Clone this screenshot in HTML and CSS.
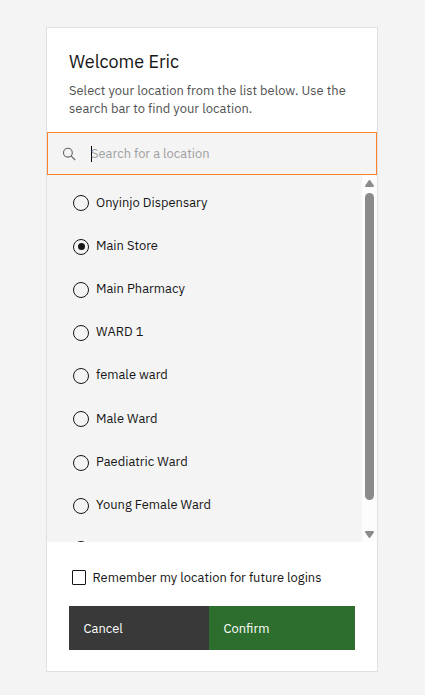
FILE: index.html
```html
<!DOCTYPE html>
<html lang="en">
<head>
    <meta charset="UTF-8">
    <title>Select location</title>
    <link rel="stylesheet" href="styles.css">
</head>
<body>

<form class="card">
    <div class="header">
        <h1>Welcome Eric</h1>
        <p>Select your location from the list below. Use the search bar to find your location.</p>
    </div>

    <div class="search">
        <svg class="search-icon" width="14" height="14" viewBox="0 0 14 14">
            <circle cx="5.9" cy="5.7" r="4.4"/>
            <path d="M9 8.8L13.2 13"/>
        </svg>
        <span class="caret"></span>
        <span class="placeholder">Search for a location</span>
    </div>

    <div class="locations">
        <div class="list">
            <label class="option"><span class="radio"></span><span class="name">Onyinjo Dispensary</span></label>
            <label class="option"><span class="radio checked"></span><span class="name">Main Store</span></label>
            <label class="option"><span class="radio"></span><span class="name">Main Pharmacy</span></label>
            <label class="option"><span class="radio"></span><span class="name">WARD 1</span></label>
            <label class="option"><span class="radio"></span><span class="name">female ward</span></label>
            <label class="option"><span class="radio"></span><span class="name">Male Ward</span></label>
            <label class="option"><span class="radio"></span><span class="name">Paediatric Ward</span></label>
            <label class="option"><span class="radio"></span><span class="name">Young Female Ward</span></label>
            <label class="option"><span class="radio"></span></label>
        </div>
        <div class="scrollbar">
            <svg width="9" height="7" viewBox="0 0 9 7"><path d="M3.7 .6Q4.5 -.4 5.3 .6L8.8 5.6Q9.2 7 8 7H1Q-.2 7 .2 5.6Z"/></svg>
            <div class="thumb"></div>
            <svg width="9" height="7" viewBox="0 0 9 7"><path d="M3.7 6.4Q4.5 7.4 5.3 6.4L8.8 1.4Q9.2 0 8 0H1Q-.2 0 .2 1.4Z"/></svg>
        </div>
    </div>

    <div class="footer">
        <label class="remember"><span class="checkbox"></span>Remember my location for future logins</label>
        <div class="buttons">
            <button type="button" class="btn cancel">Cancel</button>
            <button type="button" class="btn confirm">Confirm</button>
        </div>
    </div>
</form>

</body>
</html>
```
FILE: styles.css
```css
* { box-sizing: border-box; }
body { margin: 0; padding: 27px 0 0 46px; background: #f4f4f4; font-family: "IBM Plex Sans", Roboto, sans-serif; font-size: 12.92px; color: #161616; }
.card { width: 332px; height: 645px; border: 1px solid #e0e0e0; background: #fff; display: flex; flex-direction: column; }

.header { height: 104px; padding: 22px 22px 0; }
h1 { margin: 0; font-size: 18px; font-weight: 400; line-height: 24px; }
p { margin: 8px 0 0; line-height: 18px; letter-spacing: 0.02px; color: #525252; }

.search { height: 43px; border: 1px solid #ff832b; background: #f4f4f4; display: flex; align-items: center; padding-left: 14px; }
.search-icon { fill: none; stroke: #616161; stroke-width: 1.1; }
.caret { width: 1px; height: 16px; margin: 0 -1px 0 15px; background: #000; }
.placeholder { color: #a0a0a0; }

.locations { height: 367px; display: flex; background: #f4f4f4; overflow: hidden; }
.list { flex: 1; padding: 6.9px 0 0 26px; }
.option { height: 43.18px; display: flex; align-items: center; gap: 7px; }
.radio { width: 16px; height: 16px; border: 1px solid #161616; border-radius: 50%; display: flex; align-items: center; justify-content: center; }
.radio.checked::after { content: ""; width: 7px; height: 7px; border-radius: 50%; background: #161616; }
.name { padding-bottom: 2.5px; }

.scrollbar { width: 15px; padding: 5px 0 4px; background: #fcfcfc; display: flex; flex-direction: column; align-items: center; fill: #8b8b8b; }
.thumb { width: 9px; height: 307px; margin: 6px 0 31px; border-radius: 5px; background: #8b8b8b; flex: none; }

.footer { padding: 27px 22px 0; }
.remember { display: flex; align-items: center; height: 17px; padding-left: 3px; gap: 6.5px; }
.checkbox { width: 14px; height: 15px; border: 1px solid #161616; border-radius: 1px; }
.buttons { display: flex; margin-top: 20px; }
.btn { height: 44px; padding: 0 0 0 14.5px; border: none; color: #fff; font: inherit; text-align: left; }
.cancel { width: 140px; background: #393939; }
.confirm { width: 146px; background: #2d6e2f; }
```
